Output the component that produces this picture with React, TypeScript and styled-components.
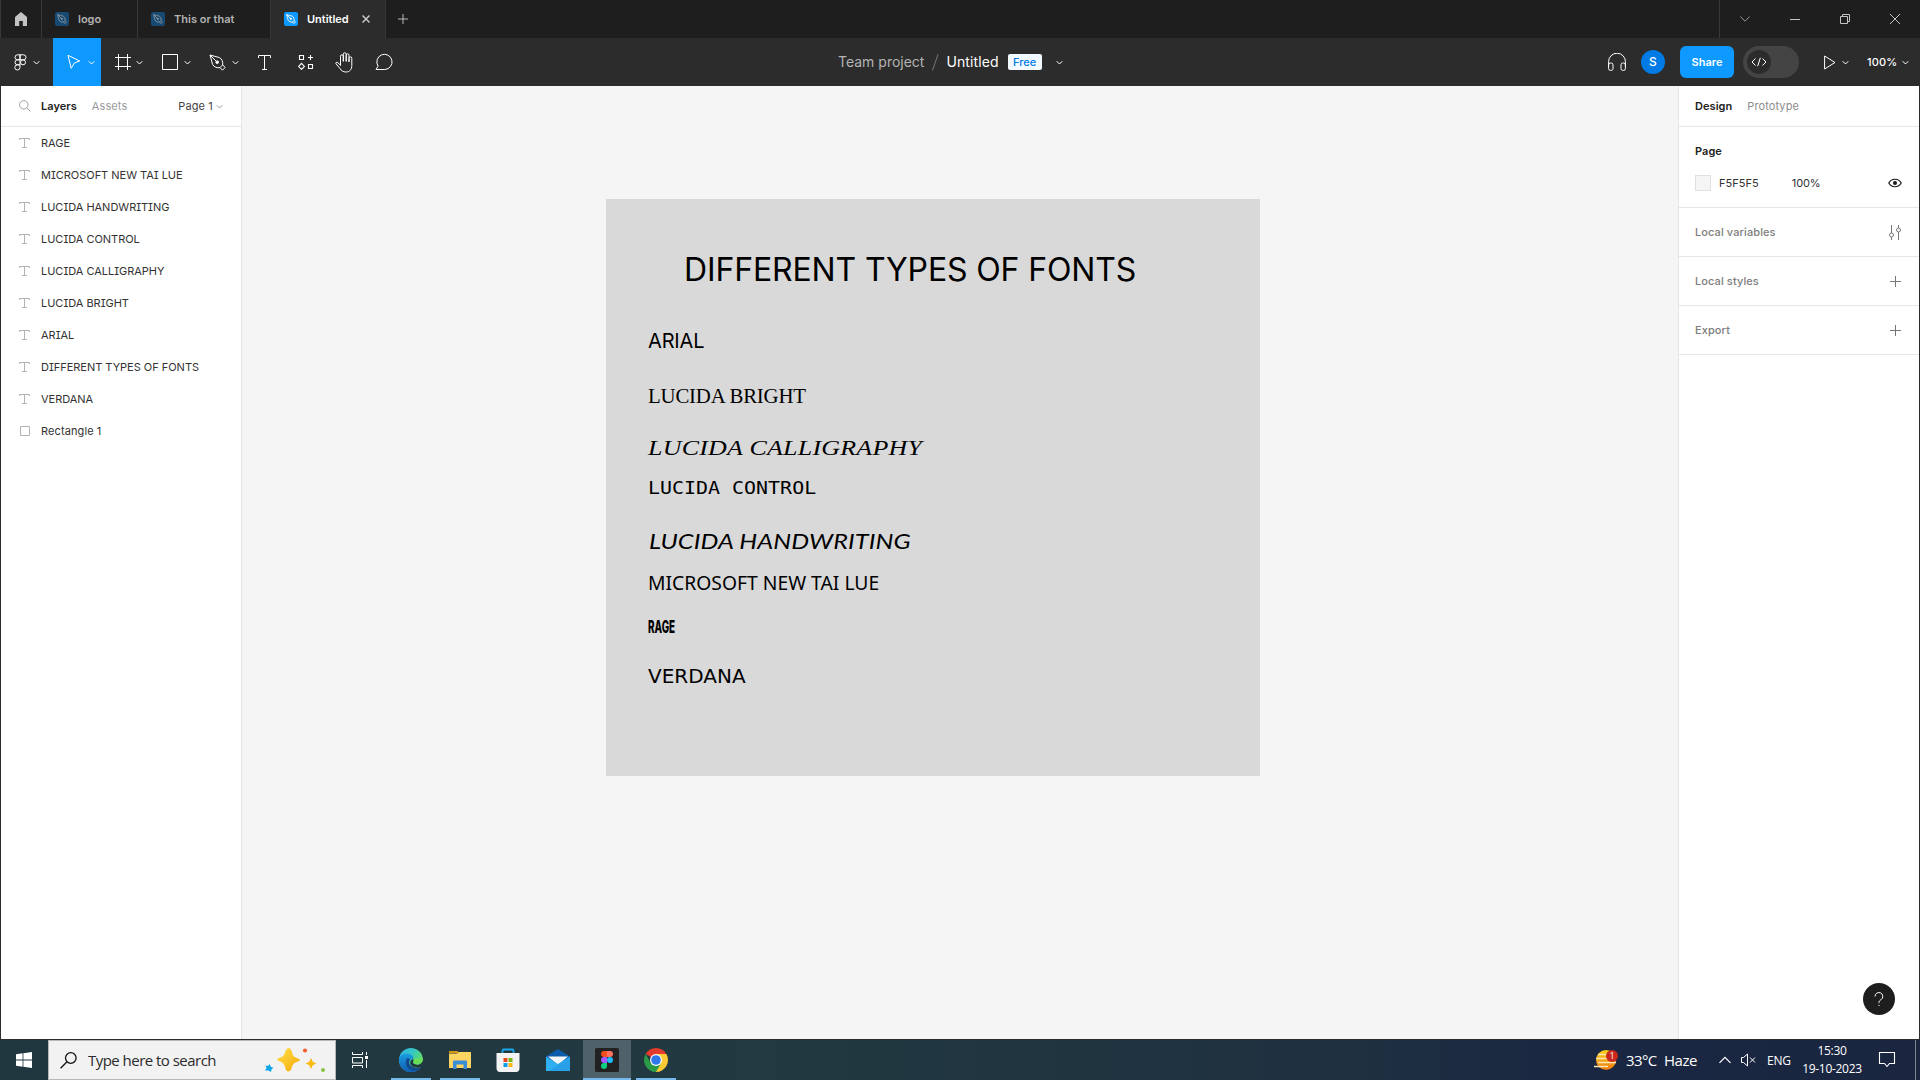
import React from "react";
import styled, { createGlobalStyle, css } from "styled-components";

const Global = createGlobalStyle`
  * { box-sizing: border-box; }
  body { margin: 0; background: #2c2c2c; font-family: Inter, "Liberation Sans", sans-serif; overflow: hidden; }
  svg { display: block; flex: none; }
`;

const UI = `Inter, "Liberation Sans", sans-serif`;
const SEGOE = `"Open Sans", "Noto Sans", sans-serif`;

const Screen = styled.div`
  width: 1920px; height: 1080px; display: flex; flex-direction: column; overflow: hidden;
`;

/* ---------- title bar ---------- */
const TitleBar = styled.header`
  height: 38px; display: flex; background: #1e1e1e; border-left: 1px solid #383838; flex: none;
`;
const HomeTab = styled.div`
  width: 41px; border-right: 1px solid #383838; display: flex; align-items: center; justify-content: center;
`;
const Tab = styled.div<{ $w: number; $active?: boolean }>`
  width: ${(p) => p.$w}px; display: flex; align-items: center; padding-left: 13px; gap: 9px;
  border-right: 1px solid #383838; font: 600 11px/38px ${UI}; letter-spacing: 0;
  color: ${(p) => (p.$active ? "#fff" : "#b3b3b3")};
  background: ${(p) => (p.$active ? "#2c2c2c" : "transparent")};
`;
const FileBadge = styled.span<{ $active?: boolean }>`
  width: 14px; height: 14px; border-radius: 2px; display: grid; place-items: center; flex: none;
  background: ${(p) => (p.$active ? "#0d99ff" : "#174a73")};
  color: ${(p) => (p.$active ? "#fff" : "#8a9299")};
`;
const TabClose = styled.span`margin-left: 4px;`;
const NewTab = styled.div`width: 34px; display: grid; place-items: center;`;
const WindowButtons = styled.div`
  margin-left: auto; width: 201px; display: flex; border-left: 1px solid #383838;
`;
const WindowButton = styled.div`width: 50px; display: grid; place-items: center; color: #c4c4c4;`;

/* ---------- toolbar ---------- */
const Toolbar = styled.div`
  height: 48px; background: #2c2c2c; display: flex; flex: none; color: #fff;
`;
const Group = styled.div<{ $w: number; $end?: boolean }>`
  width: ${(p) => p.$w}px; display: flex; align-items: center; flex: none;
  margin-left: ${(p) => (p.$end ? "auto" : 0)};
`;
const Tool = styled.div<{ $w: number; $pl: number; $gap?: number; $on?: boolean }>`
  width: ${(p) => p.$w}px; height: 48px; padding-left: ${(p) => p.$pl}px; gap: ${(p) => p.$gap ?? 6}px;
  display: flex; align-items: center; background: ${(p) => (p.$on ? "#0d99ff" : "transparent")};
`;
const Crumb = styled.span<{ $dim?: boolean; $ls?: number }>`
  font: 400 14px/20px ${UI}; letter-spacing: ${(p) => p.$ls ?? 0}px; white-space: nowrap;
  color: ${(p) => (p.$dim ? "#b3b3b3" : "#fff")};
`;
const FreeBadge = styled.span`
  margin: 0 14px 0 9px; width: 34px; height: 16px; border-radius: 2px; background: #f2f9ff; color: #007be5;
  font: 500 11px/16px ${UI}; text-align: center;
`;
const Avatar = styled.div`
  width: 24px; height: 24px; border-radius: 50%; background: #007be5; font: 500 12px/24px ${UI}; text-align: center;
  margin: 0 15px 0 15px;
`;
const Share = styled.div`
  width: 54px; height: 32px; border-radius: 6px; background: #0d99ff; font: 600 11px/32px ${UI}; text-align: center;
`;
const Toggle = styled.div`
  margin-left: 9px; width: 56px; height: 32px; border-radius: 16px; background: #444; padding: 4px;
`;
const Knob = styled.div`
  width: 24px; height: 24px; border-radius: 50%; background: #2c2c2c; display: grid; place-items: center;
`;
const Zoom = styled.span`
  font: 500 11px/16px ${UI}; margin: 0 4px 0 18px; letter-spacing: .2px;
`;

/* ---------- workspace ---------- */
const Workspace = styled.main`
  height: 954px; display: flex; background: #f5f5f5; flex: none;
  border: solid #2c2c2c; border-width: 0 1px 1px 1px;
`;
const LeftPanel = styled.aside`width: 241px; background: #fff; border-right: 1px solid #e6e6e6;`;
const PanelHeader = styled.div<{ $pl: number }>`
  height: 41px; border-bottom: 1px solid #e6e6e6; display: flex; align-items: center; padding-left: ${(p) => p.$pl}px;
`;
const Label = styled.span<{ $w?: number; $c?: string; $ml?: number; $ls?: number }>`
  font: ${(p) => p.$w ?? 400} 11px/16px ${UI}; color: ${(p) => p.$c ?? "#333"}; margin-left: ${(p) => p.$ml ?? 0}px;
  letter-spacing: ${(p) => p.$ls ?? 0.05}px; white-space: nowrap;
`;
const LayerRow = styled.div`
  height: 32px; display: flex; align-items: center; padding-left: 17px; gap: 11px; color: #b3b3b3;
`;
const LayerName = styled(Label)`font-feature-settings: "cv08" 1;`;

const Canvas = styled.section`flex: 1; position: relative; background: #f5f5f5;`;
const Artboard = styled.div`
  position: absolute; left: 364px; top: 113px; width: 654px; height: 577px; background: #d9d9d9;
`;
/* free-standing text node: its origin is the baseline start on the artboard */
const TextNode = styled.div<{ $x: number; $base: number; $size: number; $font: string; $ls?: number; $sx?: number; $weight?: number; $italic?: boolean }>`
  position: absolute; left: ${(p) => p.$x}px; top: ${(p) => p.$base - 40}px; height: 40px; display: flex; align-items: baseline;
  white-space: pre; color: #000; line-height: 0;
  font-family: ${(p) => p.$font}; font-size: ${(p) => p.$size}px; font-weight: ${(p) => p.$weight ?? 400};
  font-style: ${(p) => (p.$italic ? "italic" : "normal")}; letter-spacing: ${(p) => p.$ls ?? 0}px;
  transform: scaleX(${(p) => p.$sx ?? 1}); transform-origin: 0 0;
  &::before { content: ""; display: inline-block; height: 40px; }
`;

const RightPanel = styled.aside`width: 241px; background: #fff; border-left: 1px solid #e6e6e6; position: relative;`;
const Section = styled.div<{ $h: number; $column?: boolean }>`
  height: ${(p) => p.$h}px; border-bottom: 1px solid #e6e6e6; padding: 0 ${(p) => (p.$column ? 17 : 18)}px 0 16px; display: flex;
  ${(p) => p.$column ? css`flex-direction: column;` : css`align-items: center; justify-content: space-between;`}
`;
const SectionTitle = styled.div`padding-top: 16px; height: 40px; display: flex;`;
const FillRow = styled.div`height: 32px; display: flex; align-items: center;`;
const Swatch = styled.span`width: 16px; height: 16px; background: #f5f5f5; border: 1px solid #e0e0e0; margin-right: 8px;`;
const Push = styled.span`margin-left: auto;`;
const Help = styled.div`
  position: absolute; right: 24px; bottom: 24px; width: 32px; height: 32px; border-radius: 50%; background: #1e1e1e;
  display: grid; place-items: center;
`;

/* ---------- taskbar ---------- */
const Taskbar = styled.footer`
  height: 40px; display: flex; flex: none; color: #fff; font-family: ${SEGOE};
  background: linear-gradient(90deg, #213740 0%, #213940 40%, #1f3040 70%, #1a2742 82%, #1a2640 100%);
`;
const Start = styled.div`width: 48px; display: grid; place-items: center;`;
const Search = styled.div`
  width: 288px; height: 40px; background: #f2f2f2; border: 1px solid #b8b8b8; display: flex; align-items: center;
  padding-left: 11px; color: #2b2b2b; font-size: 15px;
`;
const SearchText = styled.span`margin-left: 11px; width: 177px; white-space: nowrap; letter-spacing: -0.53px;`;
const TaskItem = styled.div<{ $open?: boolean; $active?: boolean; $ml?: number }>`
  width: 48px; height: 40px; margin-left: ${(p) => p.$ml ?? 1}px; display: grid; place-items: center;
  background: ${(p) => (p.$active ? "#4f626a" : "transparent")};
  ${(p) => p.$open && css`
    background-image: linear-gradient(#76b9ed, #76b9ed); background-repeat: no-repeat;
    background-size: ${p.$active ? 48 : 40}px 2px; background-position: center bottom;
  `}
`;
const Tray = styled.div`margin-left: auto; width: 326px; display: flex; align-items: center;`;
const TrayText = styled.span<{ $w: number; $size: number; $ls?: number; $pl?: number }>`
  width: ${(p) => p.$w}px; padding-left: ${(p) => p.$pl ?? 0}px; font-size: ${(p) => p.$size}px; white-space: nowrap;
  letter-spacing: ${(p) => p.$ls ?? 0}px; flex: none;
`;
const Clock = styled.div`
  width: 64px; margin-left: 9px; font-size: 12px; line-height: 18px; text-align: center; letter-spacing: -0.3px; white-space: nowrap;
  flex: none;
`;
const DesktopEdge = styled.div`margin-left: 19px; width: 5px; height: 40px; border-left: 1px solid #7b8593; flex: none;`;

/* ---------- icons ---------- */
const Chevron = ({ c = "#fff" }: { c?: string }) => (
  <svg width="7" height="7" viewBox="0 0 7 7" fill="none" stroke={c}><path d="M.7 2.2 3.5 5 6.3 2.2" /></svg>
);
const PenNib = ({ size, sw = 1 }: { size: number; sw?: number }) => (
  <svg width={size} height={size} viewBox="0 0 17 17" fill="none" stroke="currentColor" strokeWidth={sw} strokeLinejoin="round">
    <path d="M1 1 10.5 3.6C13 5 14.3 8 13.6 11L11 13.6C8 14.3 5 13 3.6 10.5Z" /><path d="M1 1 7.3 7.3" />
    <circle cx="8.2" cy="8.2" r="1.3" fill="currentColor" /><path d="M13.6 11 16.2 13.4 13.4 16.2 11 13.6" />
  </svg>
);
const TypeIcon = ({ big }: { big?: boolean }) => big ? (
  <svg width="14" height="17" viewBox="0 0 14 17" fill="none" stroke="currentColor"><path d="M.5 4V1.5H12.5V4M6.5 1.5V15.5M4 15.5H9" /></svg>
) : (
  <svg width="12" height="12" viewBox="0 0 12 12" fill="none" stroke="currentColor"><path d="M1.5 3V1.5H11.5V3M6.5 1.5V10.5M4 10.5H9" /></svg>
);
const Plus = ({ c, s }: { c: string; s: number }) => (
  <svg width={s} height={s} viewBox="0 0 11 11" stroke={c}><path d="M5.5 0V11M0 5.5H11" /></svg>
);

const layers = ["RAGE", "MICROSOFT NEW TAI LUE", "LUCIDA HANDWRITING", "LUCIDA CONTROL", "LUCIDA CALLIGRAPHY", "LUCIDA BRIGHT", "ARIAL", "DIFFERENT TYPES OF FONTS", "VERDANA"];

const Titles = () => (
  <TitleBar>
    <HomeTab><svg width="14" height="14" viewBox="0 0 14 14" fill="#c4c4c4"><path d="M7 0 13 5V14H8.8V9H5.2V14H1V5Z" /></svg></HomeTab>
    <Tab $w={96}><FileBadge><PenNib size={10} sw={1.5} /></FileBadge>logo</Tab>
    <Tab $w={133}><FileBadge><PenNib size={10} sw={1.5} /></FileBadge>This or that</Tab>
    <Tab $w={115} $active>
      <FileBadge $active><PenNib size={10} sw={1.5} /></FileBadge>Untitled
      <TabClose><svg width="8" height="8" viewBox="0 0 8 8" stroke="#d0d0d0" strokeWidth="1.4"><path d="M.5.5 7.5 7.5M7.5.5.5 7.5" /></svg></TabClose>
    </Tab>
    <NewTab><Plus c="#c8c8c8" s={10} /></NewTab>
    <WindowButtons>
      <WindowButton><svg width="10" height="10" viewBox="0 0 10 10" fill="none" stroke="#999"><path d="M.3 2.5 5 7.2 9.7 2.5" /></svg></WindowButton>
      <WindowButton><svg width="10" height="10" viewBox="0 0 10 10" stroke="currentColor"><path d="M0 5.5H10" /></svg></WindowButton>
      <WindowButton><svg width="10" height="10" viewBox="0 0 10 10" fill="none" stroke="currentColor"><path d="M.5 2.5H7.5V9.5H.5ZM2.5 2.5V.5H9.5V7.5H7.5" /></svg></WindowButton>
      <WindowButton><svg width="10" height="10" viewBox="0 0 10 10" stroke="currentColor"><path d="M0 0 10 10M10 0 0 10" /></svg></WindowButton>
    </WindowButtons>
  </TitleBar>
);

const Tools = () => (
  <Toolbar>
    <Group $w={838}>
      <Tool $w={53} $pl={14} $gap={6}>
        <svg width="13" height="17" viewBox="0 0 13 17" fill="none" stroke="#fff"><path d="M6 .8H3.5a2.5 2.5 0 0 0 0 5H6ZM6 .8H9.5a2.5 2.5 0 0 1 0 5H6ZM6 5.8H3.5a2.5 2.5 0 0 0 0 5H6ZM6 10.8H3.5a2.6 2.6 0 1 0 2.5 2.6Z" /><circle cx="9" cy="8.3" r="2.5" /></svg>
        <Chevron />
      </Tool>
      <Tool $w={48} $pl={14} $gap={7} $on>
        <svg width="14" height="16" viewBox="0 0 14 16" fill="none" stroke="#fff" strokeLinejoin="round"><path d="M1 1.3 12.7 7 7.3 9 4.2 14.3Z" /></svg>
        <Chevron />
      </Tool>
      <Tool $w={48} $pl={14} $gap={5}>
        <svg width="16" height="16" viewBox="0 0 16 16" stroke="#fff"><path d="M3.5 0V16M12.5 0V16M0 3.5H16M0 12.5H16" /></svg>
        <Chevron />
      </Tool>
      <Tool $w={48} $pl={13} $gap={6}>
        <svg width="16" height="16" viewBox="0 0 16 16" fill="none" stroke="#fff"><path d="M.5.5H15.5V15.5H.5Z" /></svg>
        <Chevron />
      </Tool>
      <Tool $w={48} $pl={12} $gap={6}><PenNib size={17} /><Chevron /></Tool>
      <Tool $w={40} $pl={13}><TypeIcon big /></Tool>
      <Tool $w={40} $pl={13}>
        <svg width="16" height="16" viewBox="0 0 16 16" fill="none" stroke="#fff" strokeWidth="1.1"><path d="M1.5 1.5H5.5V5.5H1.5ZM10.5 10.5H14.5V14.5H10.5ZM3.5 9.3 6.4 12.4 3.5 15.4.6 12.4ZM12.5 1V6M10 3.5H15" /></svg>
      </Tool>
      <Tool $w={40} $pl={10}>
        <svg width="18" height="21" viewBox="0 0 18 21" fill="none" stroke="#fff" strokeLinecap="round" strokeLinejoin="round"><path d="M5.5 13V4.2a1.4 1.4 0 0 1 2.8 0V9M8.3 9V2.2a1.4 1.4 0 0 1 2.9 0V9M11.2 9V3.2a1.4 1.4 0 0 1 2.8 0V9.5M14 9.5V6.2a1.4 1.4 0 0 1 2.8 0V13.5C16.8 17.5 14.5 20 11.2 20C8.200 20 6.5 19 5 16.5L1 11.8C.3 10.6 1.7 9.7 2.8 10.7L5.5 13.2" /></svg>
      </Tool>
      <Tool $w={40} $pl={10}>
        <svg width="20" height="18" viewBox="0 0 20 18" fill="none" stroke="#fff" strokeLinejoin="round"><path d="M1 16.5 3.1 13.1A7.600 7.600 0 1 1 9.8 16.5Z" /></svg>
      </Tool>
    </Group>
    <Group $w={240}>
      <Crumb $dim>Team project</Crumb>
      <svg width="22" height="18" viewBox="0 0 22 18" stroke="#777"><path d="M8.5 17.5 14 1.5" /></svg>
      <Crumb $ls={0.1}>Untitled</Crumb>
      <FreeBadge>Free</FreeBadge>
      <Chevron />
    </Group>
    <Group $w={312} $end>
      <svg width="18" height="18" viewBox="0 0 18 18" fill="none" stroke="#fff"><path d="M.6 13V8.6a8.4 8.4 0 0 1 16.8 0V13" /><rect x=".6" y="10" width="4.4" height="7.4" rx="1.8" /><rect x="13" y="10" width="4.4" height="7.4" rx="1.8" /></svg>
      <Avatar>S</Avatar>
      <Share>Share</Share>
      <Toggle><Knob><svg width="16" height="10" viewBox="0 0 16 10" fill="none" stroke="#fff"><path d="M4.5 1.5 1 5 4.5 8.5M11.5 1.5 15 5 11.5 8.5M9.3.8 6.7 9.2" /></svg></Knob></Toggle>
      <Tool $w={50} $pl={25} $gap={6}>
        <svg width="12" height="15" viewBox="0 0 12 15" fill="none" stroke="#fff" strokeLinejoin="round"><path d="M.6 1 11 7.5.6 14Z" /></svg>
        <Chevron />
      </Tool>
      <Zoom>100%</Zoom>
      <Chevron />
    </Group>
  </Toolbar>
);

const EdgeIcon = () => (
  <svg width="24" height="24" viewBox="0 0 24 24">
    <defs>
      <linearGradient id="eg" x1="0" y1="0" x2="1" y2=".6"><stop offset="0" stopColor="#2fb5ea" /><stop offset=".5" stopColor="#33c7c3" /><stop offset="1" stopColor="#6be14f" /></linearGradient>
      <linearGradient id="eb" x1="0" y1="0" x2="0" y2="1"><stop offset="0" stopColor="#1b9de2" /><stop offset="1" stopColor="#0f5cb0" /></linearGradient>
    </defs>
    <circle cx="12" cy="12" r="12" fill="url(#eg)" />
    <path d="M0 12C0 7.5 4 5.5 8 5.5c4 0 6.5 2.5 6.5 5.5-2-.8-4.500.5-4.500 3.5 0 3.5 4 5.5 8 5.5 1.700 0 3-.5 4-1A12 12 0 0 1 0 12Z" fill="url(#eb)" />
    <path d="M8.5 10C6.5 12 6 16 8.5 19.5 11 22.5 15 23.5 18 22.4 20 21.5 21.5 20 22.3 18.7 20.5 20 16 20.3 13 18.5 10 16.8 9.3 13.5 11.3 11.5Z" fill="#144a8c" />
    <path d="M14.5 11C15 13 14 13.6 14 14.6 14.5 16.5 18 17 20 16.4 22 15.6 23.6 14 24 12V20L23 18.8C20 20.2 15 20 12.4 17.5 10 15 11.5 11.5 14.5 11Z" fill="#213940" />
    <path d="M14.6 10.5C15.2 12.5 14 13.5 14.3 14.6 15 16 18 16.6 20.3 15.8 22.5 15 24 13 23.8 10.5Z" fill="#67de58" />
  </svg>
);
const ChromeIcon = () => (
  <svg width="24" height="24" viewBox="0 0 24 24">
    <path d="M12 12 1.610 6A12 12 0 0 1 22.390 6Z" fill="#e33b2e" />
    <path d="M12 12V6H22.390A12 12 0 0 1 12 24Z" fill="#fcc934" />
    <path d="M12 24A12 12 0 0 1 1.610 6L6.8 15 12 12 17.2 15Z" fill="#2a9b47" />
    <circle cx="12" cy="12" r="6" fill="#fff" /><circle cx="12" cy="12" r="4.8" fill="#2f78ea" />
  </svg>
);
const FigmaIcon = () => (
  <svg width="24" height="24" viewBox="0 0 24 24">
    <rect width="24" height="24" rx="1.5" fill="#222" />
    <path d="M12 3H9a3 3 0 0 0 0 6h3Z" fill="#f24e1e" /><path d="M12 3h3a3 3 0 0 1 0 6h-3Z" fill="#ff7262" />
    <path d="M12 9H9a3 3 0 0 0 0 6h3Z" fill="#a259ff" /><circle cx="15" cy="12" r="3" fill="#1abcfe" />
    <path d="M12 15H9a3 3 0 1 0 3 3Z" fill="#0acf83" />
  </svg>
);

const Bar = () => (
  <Taskbar>
    <Start><svg width="16" height="16" viewBox="0 0 16 16" fill="#fff"><path d="M0 2.2 6.6 1.3V7.6H0ZM7.4 1.2 16 0V7.6H7.4ZM0 8.4H6.6V14.7L0 13.8ZM7.4 8.4H16V16L7.4 14.8Z" /></svg></Start>
    <Search>
      <svg width="17" height="17" viewBox="0 0 17 17" fill="none" stroke="#111" strokeWidth="1.3"><circle cx="10.8" cy="6" r="5.3" /><path d="M7 9.8.6 16.2" /></svg>
      <SearchText>Type here to search</SearchText>
      <svg width="60" height="26" viewBox="0 0 60 26">
        <defs><linearGradient id="sp" x1="0" y1="0" x2="1" y2="1"><stop offset="0" stopColor="#ffe04a" /><stop offset="1" stopColor="#f5a90a" /></linearGradient></defs>
        <path d="M23.5 1Q26 1 27 5.5T32 11Q35 12 35 13T31.5 15Q28 16 27 20T23.5 24.5Q21 24.5 20 20T15 14.5Q12 13.5 12 12.5T15.5 10.5Q19 9.5 20 5.5T23.5 1Z" fill="url(#sp)" />
        <path d="M46 11 48 15 51.5 16.5 48 18 46 22 44 18 40.5 16.5 44 15Z" fill="#fbb914" />
        <path d="M4.5 17 6 20 8.3 20.5 6.5 22.5 6 25 3.5 23.5 0 23.5 1.5 21 .5 18.5 3 19Z" fill="#0ea5e9" />
        <circle cx="40" cy="3.5" r="2.1" fill="#f4622f" /><circle cx="58" cy="23" r="2" fill="#8ac441" />
      </svg>
    </Search>
    <TaskItem $ml={0}>
      <svg width="16" height="16" viewBox="0 0 16 16" fill="none" stroke="#fff"><path d="M.5 0V2.5H10.5V0M.5 16V13.5H10.5V16M.5 5.5H10.5V11H.5ZM14.5 0V3M14.5 8V16" /><rect x="13" y="4" width="3" height="3" fill="#fff" stroke="none" /></svg>
    </TaskItem>
    <TaskItem $ml={3} $open><EdgeIcon /></TaskItem>
    <TaskItem $open>
      <svg width="22" height="20" viewBox="0 0 22 20"><path d="M0 1H8.5L10 3H0Z" fill="#d9960f" /><path d="M0 3.5H8L10 2H22V18H0Z" fill="#fcd462" /><path d="M4 19V11.5Q4 10.5 5 10.5H17Q18 10.5 18 11.5V19H14.5V14.5H7.5V19Z" fill="#3a8ed8" /></svg>
    </TaskItem>
    <TaskItem $ml={0}>
      <svg width="24" height="24" viewBox="0 0 24 24"><path d="M6.5 6V2.5Q6.5 1.500 7.5 1.5H16.5Q17.5 1.5 17.5 2.5V6" fill="none" stroke="#1aa7ec" strokeWidth="1.8" /><path d="M.5 5H23.5V20Q23.5 24 20 24H4Q.5 24 .5 20Z" fill="#f3f3f3" /><path d="M7.5 10H11.5V14H7.5Z" fill="#e8481f" /><path d="M12.5 10H16.5V14H12.5Z" fill="#7cb518" /><path d="M7.5 15H11.5V19H7.5Z" fill="#0c9fe8" /><path d="M12.5 15H16.5V19H12.5Z" fill="#fdb813" /></svg>
    </TaskItem>
    <TaskItem $ml={2}>
      <svg width="24" height="22" viewBox="0 0 24 22"><path d="M0 7.5 12 0 24 7.5V12H0Z" fill="#0d5cab" /><path d="M2 7.5H22L12 16Z" fill="#f4f6f8" /><path d="M0 7.5 12 15 24 7.5V22H0Z" fill="#2fb0f2" /><path d="M24 7.5V22H3Z" fill="#2498e2" opacity=".6" /></svg>
    </TaskItem>
    <TaskItem $open $active><FigmaIcon /></TaskItem>
    <TaskItem $open><ChromeIcon /></TaskItem>
    <Tray>
      <svg width="25" height="21" viewBox="0 0 25 21">
        <defs><linearGradient id="sun" x1="0" y1="0" x2="0" y2="1"><stop offset="0" stopColor="#fdd219" /><stop offset="1" stopColor="#ee7a12" /></linearGradient></defs>
        <circle cx="12" cy="10" r="10" fill="url(#sun)" /><path d="M4 4.5H14M2 8.5H16M4 12.500H22M0 16.500H14" stroke="#fbe6b5" strokeWidth="1.5" />
        <circle cx="18" cy="6" r="6" fill="#c9281c" />
        <text x="18" y="9.3" fill="#fff" fontSize="9" textAnchor="middle" fontFamily={SEGOE}>1</text>
      </svg>
      <TrayText $w={45} $pl={7} $size={15} $ls={-0.6}>33°C</TrayText>
      <TrayText $w={55} $size={15} $ls={-0.5}>Haze</TrayText>
      <svg width="12" height="8" viewBox="0 0 12 8" fill="none" stroke="#fff" strokeWidth="1.2"><path d="M.5 6.8 6 1.3 11.5 6.8" /></svg>
      <svg width="36" height="14" viewBox="0 0 36 14" fill="none" stroke="#fff"><path d="M10.5 4.5H12.5L16.5 1V13L12.5 9.5H10.5ZM19 4.5 24 9.5M24 4.5 19 9.5" /></svg>
      <TrayText $w={24} $size={12} $ls={-0.2}>ENG</TrayText>
      <Clock>15:30<br />19-10-2023</Clock>
      <svg width="32" height="18" viewBox="0 0 32 18" fill="none" stroke="#fff" strokeWidth="1.1"><path d="M15.5 1.5H30.5V12.5H25.500L23 15.5 20.500 12.5H15.5Z" /></svg>
      <DesktopEdge />
    </Tray>
  </Taskbar>
);

export default function App() {
  return (
    <Screen>
      <Global />
      <Titles />
      <Tools />
      <Workspace>
        <LeftPanel>
          <PanelHeader $pl={18}>
            <svg width="12" height="12" viewBox="0 0 12 12" fill="none" stroke="#a0a0a0"><circle cx="4.8" cy="4.8" r="4.2" /><path d="M7.8 7.8 11.5 11.5" /></svg>
            <Label $w={600} $c="#222" $ml={10}>Layers</Label>
            <Label $c="#9a9a9a" $ml={15} $ls={0.1}>Assets</Label>
            <Label $c="#444" $ml={51} $ls={0.1}>Page 1&nbsp;</Label>
            <Chevron c="#999" />
          </PanelHeader>
          {layers.map((name) => (
            <LayerRow key={name}><TypeIcon /><LayerName $ls={-0.02}>{name}</LayerName></LayerRow>
          ))}
          <LayerRow>
            <svg width="12" height="12" viewBox="0 0 12 12" fill="none" stroke="currentColor"><path d="M2.5 1.5H11.5V10.5H2.5Z" /></svg>
            <LayerName $ls={0.1}>Rectangle 1</LayerName>
          </LayerRow>
        </LeftPanel>
        <Canvas>
          <Artboard>
            <TextNode $x={78} $base={82} $size={32} $font={UI} $ls={-0.14}>DIFFERENT TYPES OF FONTS</TextNode>
            <TextNode $x={42} $base={149} $size={20} $font={UI} $ls={-0.15}>ARIAL</TextNode>
            <TextNode $x={42} $base={204} $size={22} $font={`"Liberation Serif", serif`} $ls={-0.2} $sx={0.947}>LUCIDA BRIGHT</TextNode>
            <TextNode $x={42} $base={256} $size={22} $font={`"Liberation Serif", serif`} $italic $sx={1.18} $ls={0.2}>LUCIDA CALLIGRAPHY</TextNode>
            <TextNode $x={42} $base={295} $size={17.5} $font={`"DejaVu Sans Mono", monospace`} $sx={1.14}>LUCIDA CONTROL</TextNode>
            <TextNode $x={43} $base={350} $size={21} $font={`"Lato", sans-serif`} $italic $sx={1.2} $ls={0.1}>LUCIDA HANDWRITING</TextNode>
            <TextNode $x={42} $base={391} $size={20} $font={`"Noto Sans", sans-serif`} $sx={0.965}>MICROSOFT NEW TAI LUE</TextNode>
            <TextNode $x={42} $base={434} $size={17} $font={UI} $weight={800} $sx={0.58}>RAGE</TextNode>
            <TextNode $x={42} $base={484} $size={20} $font={`"DejaVu Sans", sans-serif`}>VERDANA</TextNode>
          </Artboard>
        </Canvas>
        <RightPanel>
          <PanelHeader $pl={16}>
            <Label $w={600} $c="#222">Design</Label>
            <Label $c="#8c8c8c" $ml={15} $ls={0.1}>Prototype</Label>
          </PanelHeader>
          <Section $h={81} $column>
            <SectionTitle><Label $w={600} $c="#222">Page</Label></SectionTitle>
            <FillRow>
              <Swatch /><Label>F5F5F5</Label><Label $ml={33} $ls={-0.15}>100%</Label>
              <Push><svg width="14" height="10" viewBox="0 0 14 10" fill="none" stroke="#1a1a1a" strokeWidth="1.2"><path d="M.8 5C3.5 0 10.5 0 13.2 5C10.5 10 3.5 10 .8 5Z" /><circle cx="7" cy="5" r="2" fill="#1a1a1a" stroke="none" /></svg></Push>
            </FillRow>
          </Section>
          <Section $h={49}>
            <Label $w={500} $c="#7d7d7d" $ls={0.1}>Local variables</Label>
            <svg width="13" height="15" viewBox="0 0 13 15" fill="none" stroke="#777"><path d="M3.5 0V8M3.5 12V15M10.5 0V3M10.5 7V15" /><circle cx="3.5" cy="10" r="2" /><circle cx="10.5" cy="5" r="2" /></svg>
          </Section>
          <Section $h={49}><Label $w={500} $c="#7d7d7d" $ls={0.1}>Local styles</Label><Plus c="#777" s={11} /></Section>
          <Section $h={49}><Label $w={500} $c="#7d7d7d" $ls={0.1}>Export</Label><Plus c="#777" s={11} /></Section>
          <Help><svg width="10" height="15" viewBox="0 0 10 15" fill="none" stroke="#fff"><path d="M1 4.5a3.9 3.9 0 1 1 6 3.2C5.6 8.6 5 9.2 5 10.5V11.2M5 13V14" /></svg></Help>
        </RightPanel>
      </Workspace>
      <Bar />
    </Screen>
  );
}
